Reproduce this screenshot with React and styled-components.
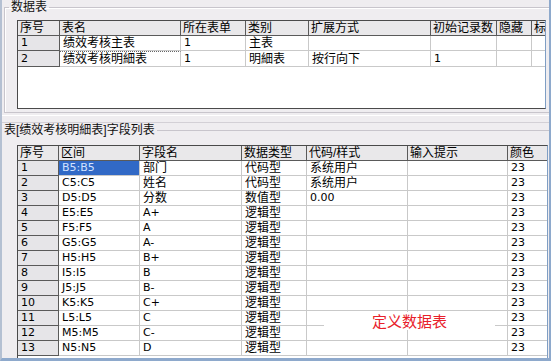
import React from 'react';
import styled, { createGlobalStyle } from 'styled-components';

const GlobalStyle = createGlobalStyle`
  html, body {
    margin: 0;
    padding: 0;
    background: #efedf0;
  }
  body {
    font-family: "Liberation Sans", "Noto Sans CJK SC", sans-serif;
    font-size: 12px;
    color: #000;
  }
`;

const Window = styled.div`
  width: 551px;
  height: 361px;
  box-sizing: border-box;
  border-left: 2px solid #b4c0d2;
  border-right: 2px solid #8ea9cc;
  border-bottom: 3px solid #8ea9cc;
  overflow: hidden;
`;

const Group = styled.fieldset`
  margin: 0 0 0 ${p => p.$indent}px;
  padding: 0;
  min-width: 0;
  border: none;
  border-top: 1px solid #c8c5cc;
  border-left: ${p => (p.$indent ? '1px solid #c8c5cc' : 'none')};
  border-bottom: ${p => (p.$indent ? '1px solid #c8c5cc' : 'none')};
  box-shadow: ${p => (p.$indent ? 'inset 1px 1px 0 #fff' : 'none')};
`;

const Legend = styled.legend`
  margin-left: ${p => p.$offset}px;
  padding: 0 2px;
  line-height: 14px;
  font-size: 12px;
  color: #111;
`;

const GroupBody = styled.div`
  padding: ${p => p.$pad};
`;

const Splitter = styled.div`
  height: 6px;
  margin-top: 2px;
  border-top: 1px solid #fff;
  border-bottom: 1px solid #d3d0d6;
`;

const GridBox = styled.div`
  position: relative;
  width: ${p => p.$w}px;
  height: ${p => p.$h}px;
  box-sizing: border-box;
  background: #fff;
  border-top: 1px solid #4a4a4a;
  border-left: 1px solid #4a4a4a;
  border-bottom: 1px solid #4a4a4a;
  border-right: 1px solid #7f9ec4;
  overflow: hidden;
`;

const Table = styled.table`
  border-collapse: separate;
  border-spacing: 0;
  table-layout: fixed;
  width: ${p => p.$w}px;
`;

const Head = styled.th`
  height: 14px;
  padding: 0 0 0 2px;
  text-align: left;
  font-weight: normal;
  line-height: 14px;
  background: #e9e8ea;
  border-right: 1px solid #5a5a5a;
  border-bottom: 1px solid #5a5a5a;
  white-space: nowrap;
  overflow: hidden;
`;

const RowHead = styled.td`
  height: 14px;
  padding: 0 0 0 3px;
  line-height: 14px;
  font-size: 11px;
  font-family: "DejaVu Sans", "Noto Sans CJK SC", sans-serif;
  background: #e6e5e8;
  border-right: 1px solid #5a5a5a;
  border-bottom: 1px solid #5a5a5a;
`;

const Cell = styled.td`
  height: 14px;
  padding: 0 0 0 3px;
  line-height: 14px;
  white-space: nowrap;
  overflow: hidden;
  font-size: ${p => (p.$latin ? '11px' : '12px')};
  font-family: ${p =>
    p.$latin
      ? '"DejaVu Sans", "Noto Sans CJK SC", sans-serif'
      : '"Liberation Sans", "Noto Sans CJK SC", sans-serif'};
  background: ${p => (p.$selected ? '#3169c6' : '#fff')};
  color: ${p => (p.$selected ? '#d2e2ff' : '#000')};
  border-right: 1px solid #c9c9c9;
  border-bottom: 1px solid #c9c9c9;
  border-top: ${p => (p.$focus ? '1px dotted #666' : 'none')};
`;

const Stamp = styled.div`
  position: absolute;
  left: 306px;
  top: 166px;
  width: 171px;
  height: 18px;
  background: #fff;
  color: #e8202a;
  font-size: 15px;
  line-height: 18px;
  text-align: center;
  font-family: "Noto Sans CJK SC", sans-serif;
`;

const topCols = [42, 121, 65, 63, 122, 66, 35, 50];
const topHeads = ['序号', '表名', '所在表单', '类别', '扩展方式', '初始记录数', '隐藏', '标'];
const topRows = [
  ['1', '绩效考核主表', '1', '主表', '', '', '', ''],
  ['2', '绩效考核明細表', '1', '明細表', '按行向下', '1', '', ''],
];

const fieldCols = [41, 81, 102, 65, 101, 100, 41];
const fieldHeads = ['序号', '区间', '字段名', '数据类型', '代码/样式', '输入提示', '颜色'];
const letters = ['B', 'C', 'D', 'E', 'F', 'G', 'H', 'I', 'J', 'K', 'L', 'M', 'N'];
const names = ['部门', '姓名', '分数', 'A+', 'A', 'A-', 'B+', 'B', 'B-', 'C+', 'C', 'C-', 'D'];
const fieldRows = letters.map((l, i) => [
  String(i + 1),
  `${l}5:${l}5`,
  names[i],
  i < 2 ? '代码型' : i === 2 ? '数值型' : '逻辑型',
  i < 2 ? '系统用户' : i === 2 ? '0.00' : '',
  '',
  '23',
]);

const latin = v => /^[\x00-\x7f]*$/.test(v);

const sum = a => a.reduce((s, n) => s + n, 0);

const Grid = ({ cols, heads, rows, width, height, selected, focus, children }) => (
  <GridBox $w={width} $h={height}>
    <Table $w={sum(cols)}>
      <colgroup>
        {cols.map((w, i) => (
          <col key={i} style={{ width: w }} />
        ))}
      </colgroup>
      <thead>
        <tr>
          {heads.map(h => (
            <Head key={h}>{h}</Head>
          ))}
        </tr>
      </thead>
      <tbody>
        {rows.map((r, ri) => (
          <tr key={ri}>
            <RowHead>{r[0]}</RowHead>
            {r.slice(1).map((v, ci) => (
              <Cell
                key={ci}
                $latin={latin(v)}
                $selected={selected && selected[0] === ri && selected[1] === ci + 1}
                $focus={focus && focus[0] === ri && focus[1] === ci + 1}
              >
                {v}
              </Cell>
            ))}
          </tr>
        ))}
      </tbody>
    </Table>
    {children}
  </GridBox>
);

export default function App() {
  return (
    <>
      <GlobalStyle />
      <Window>
        <Group $indent={2}>
          <Legend $offset={4}>数据表</Legend>
          <GroupBody $pad="6px 0 3px 12px">
            <Grid cols={topCols} heads={topHeads} rows={topRows} width={529} height={89} focus={[1, 1]} />
          </GroupBody>
        </Group>
        <Splitter />
        <Group $indent={0}>
          <Legend $offset={0}>表[绩效考核明細表]字段列表</Legend>
          <GroupBody $pad="8px 0 0 15px">
            <Grid cols={fieldCols} heads={fieldHeads} rows={fieldRows} width={531} height={220} selected={[0, 1]}>
              <Stamp>定义数据表</Stamp>
            </Grid>
          </GroupBody>
        </Group>
      </Window>
    </>
  );
}
